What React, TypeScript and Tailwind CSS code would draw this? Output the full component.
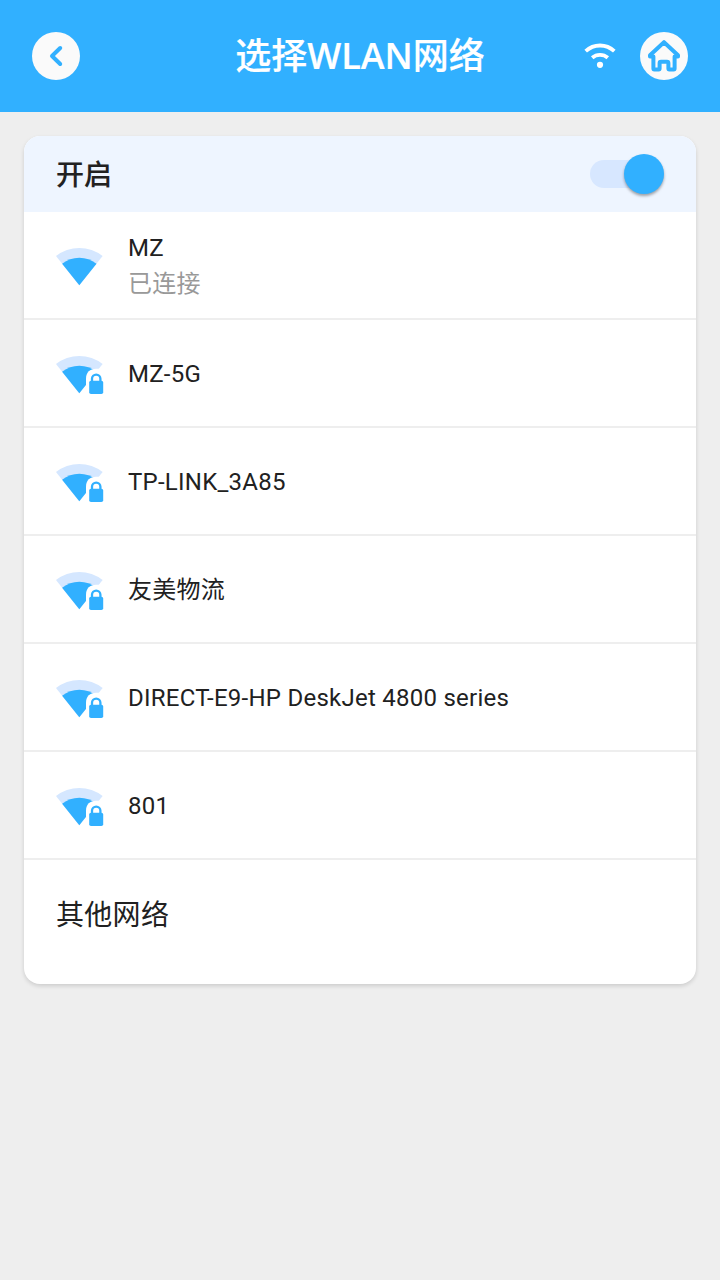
const roboto = "font-['Roboto','Noto_Sans_CJK_SC',sans-serif]";

const networks = [
  { name: 'MZ', status: '已连接', locked: false },
  { name: 'MZ-5G', locked: true },
  { name: 'TP-LINK_3A85', locked: true },
  { name: '友美物流', locked: true },
  { name: 'DIRECT-E9-HP DeskJet 4800 series', locked: true },
  { name: '801', locked: true },
];

function SignalIcon({ locked }: { locked: boolean }) {
  return (
    <svg viewBox="0 0 48 48" className="h-12 w-12 shrink-0">
      <path d="M0 14.1A37.3 37.3 0 0 1 46.6 14.1L23.3 43.2Z" fill="#d5e7ff" />
      <path d="M6.1 21.8A27.3 27.3 0 0 1 40.5 21.8L23.3 43.2Z" fill="#31b0ff" />
      {locked && (
        <>
          <path d="M30 48V28.5C30 22.5 34 18.8 40 18.8H48V48Z" fill="#fff" />
          <path d="M36 32V28.8a4.2 4.2 0 0 1 8.4 0V32" fill="none" stroke="#31b0ff" strokeWidth="2.3" />
          <rect x="33.2" y="30.8" width="14" height="13.2" rx="1.8" fill="#31b0ff" />
        </>
      )}
    </svg>
  );
}

export default function App() {
  return (
    <div className={`flex min-h-screen flex-col bg-[#eeeeee] text-[#212121] ${roboto}`}>
      <header className="grid h-28 grid-cols-[104px_1fr_104px] items-center bg-[#31b0ff] px-8">
        <button className="flex h-12 w-12 items-center justify-center rounded-full bg-[#fafafa]">
          <svg viewBox="0 0 48 48" className="h-12 w-12" fill="none" stroke="#31b0ff" strokeWidth="4" strokeLinecap="round" strokeLinejoin="round">
            <path d="M28.2 16L20 24L28.2 32" />
          </svg>
        </button>
        <h1 className="pb-1 text-center font-['Noto_Sans_CJK_SC',sans-serif] text-4xl font-medium whitespace-nowrap text-white [-webkit-text-stroke:0.2px_white]">
          选择<span className="font-['Open_Sans',sans-serif] font-semibold">WLAN</span>网络
        </h1>
        <div className="flex items-center justify-end gap-6">
          <svg viewBox="0 0 32 32" className="h-8 w-8 shrink-0" fill="none" stroke="#fff" strokeWidth="3.8">
            <path d="M1.7 11.1A21 21 0 0 1 30.3 11.1" />
            <path d="M8.2 17.8A12 12 0 0 1 23.8 17.8" />
            <circle cx="16" cy="24.8" r="3.1" fill="#fff" stroke="none" />
          </svg>
          <button className="h-12 w-12 shrink-0 rounded-full bg-[#fafafa]">
            <svg viewBox="0 0 48 48" className="h-12 w-12" fill="none" stroke="#31b0ff" strokeWidth="4" strokeLinecap="round" strokeLinejoin="round">
              <path d="M24 10.2L10 23.2V24.4H13.4V36.6Q13.4 37.6 14.4 37.6H18.6Q19.6 37.6 19.6 36.6V31.2Q19.6 29.8 21 29.8H27Q28.4 29.8 28.4 31.2V36.6Q28.4 37.6 29.4 37.6H33.6Q34.6 37.6 34.6 36.6V24.4H38V23.2Z" />
            </svg>
          </button>
        </div>
      </header>
      <main className="p-6">
        <section className="overflow-hidden rounded-2xl bg-white shadow-[0_2px_4px_rgba(0,0,0,0.14)]">
          <div className="flex h-19 items-center justify-between bg-[#eef5ff] px-8">
            <h2 className="pt-1 text-[28px] leading-none font-medium [-webkit-text-stroke:0.1px_#212121]">开启</h2>
            <button role="switch" aria-checked="true" className="flex h-7 w-[74px] items-center justify-end rounded-full bg-[#d7e7ff]">
              <span className="h-10 w-10 rounded-full bg-[#31b0ff] shadow-[0_2px_3px_rgba(0,0,0,0.35)]" />
            </button>
          </div>
          <ul>
            {networks.map((n) => (
              <li key={n.name} className="flex h-27 items-center gap-6 border-b-2 border-[#eeeeee] px-8 pt-0.5 text-2xl">
                <SignalIcon locked={n.locked} />
                <div>
                  <p className="leading-9 tracking-[0.25px]">{n.name}</p>
                  {n.status && <p className="pt-px leading-[35px] tracking-[0.2px] text-[#999999]">{n.status}</p>}
                </div>
              </li>
            ))}
          </ul>
          <button className="flex h-31 w-full px-8 pt-[34px] text-[28px] leading-[44px] tracking-[0.3px]">其他网络</button>
        </section>
      </main>
    </div>
  );
}
